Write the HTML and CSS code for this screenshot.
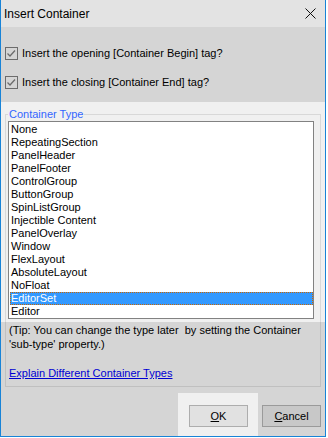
FILE: index.html
```html
<!DOCTYPE html>
<html lang="en">
<head>
<meta charset="UTF-8">
<meta name="viewport" content="width=device-width, initial-scale=1.0">
<title>Insert Container</title>
<link rel="stylesheet" href="styles.css">
</head>
<body>

<div class="window">
    <div class="titlebar">
        <span class="title">Insert Container</span>
        <svg class="close" width="11" height="11" viewBox="0 0 11 11">
            <path d="M0.5 0.5 L10.5 10.5 M10.5 0.5 L0.5 10.5" stroke="#111" stroke-width="1"/>
        </svg>
    </div>

    <div class="content">
        <div class="options">
            <label class="check-row">
                <svg class="check" width="13" height="13" viewBox="0 0 13 13">
                    <rect x="0.5" y="0.5" width="12" height="12" fill="none" stroke="#7a7a7a"/>
                    <path d="M2.5 6.5 L5 9 L10 3.5" fill="none" stroke="#7a7a7a" stroke-width="1.3"/>
                </svg>
                <span>Insert the opening [Container Begin] tag?</span>
            </label>
            <label class="check-row">
                <svg class="check" width="13" height="13" viewBox="0 0 13 13">
                    <rect x="0.5" y="0.5" width="12" height="12" fill="none" stroke="#7a7a7a"/>
                    <path d="M2.5 6.5 L5 9 L10 3.5" fill="none" stroke="#7a7a7a" stroke-width="1.3"/>
                </svg>
                <span>Insert the closing [Container End] tag?</span>
            </label>
        </div>

        <fieldset class="group">
            <legend>Container Type</legend>
            <ul class="listbox">
                <li>None</li>
                <li>RepeatingSection</li>
                <li>PanelHeader</li>
                <li>PanelFooter</li>
                <li>ControlGroup</li>
                <li>ButtonGroup</li>
                <li>SpinListGroup</li>
                <li>Injectible Content</li>
                <li>PanelOverlay</li>
                <li>Window</li>
                <li>FlexLayout</li>
                <li>AbsoluteLayout</li>
                <li>NoFloat</li>
                <li class="selected">EditorSet</li>
                <li>Editor</li>
            </ul>
            <p class="tip">(Tip: You can change the type later&nbsp; by setting the Container<br>'sub-type' property.)</p>
            <a class="link" href="#">Explain Different Container Types</a>
        </fieldset>

        <div class="buttons">
            <button class="btn"><u>O</u>K</button>
            <button class="btn"><u>C</u>ancel</button>
        </div>
    </div>

    <!-- dimmed areas around the highlighted parts -->
    <div class="dim dim-top"></div>
    <div class="dim dim-mid"></div>
    <div class="dim dim-left"></div>
    <div class="dim dim-right"></div>
</div>

</body>
</html>
```

FILE: styles.css
```css
body {
    margin: 0;
    background: #fff;
}

.window {
    position: relative;
    width: 326px;
    height: 437px;
    box-sizing: border-box;
    border: 1px solid #1883d7;
    border-top: none;
    background: #f0f0f0;
    font-family: "Liberation Sans", Arial, sans-serif;
    font-size: 11px;
    color: #000;
}

.titlebar {
    height: 27px;
    background: #fff;
    display: flex;
    align-items: center;
    justify-content: space-between;
    padding: 0 9px 0 3px;
    font-size: 12px;
}

.close {
    display: block;
}

.content {
    padding: 0 4px;
}

.options {
    padding-top: 17px;
}

.check-row {
    display: flex;
    align-items: center;
    gap: 4px;
    height: 18px;
}

.check-row + .check-row {
    margin-top: 11px;
}

.check {
    display: block;
    flex: none;
}

.group {
    width: 316px;
    box-sizing: border-box;
    margin: 17px 0 0 0;
    padding: 0 2px 6px 2px;
    border: 1px solid #d8d8d8;
    min-inline-size: 0;
}

.group legend {
    padding: 0 1px;
    line-height: 13px;
    color: #3366ff;
}

.listbox {
    list-style: none;
    margin: 0;
    padding: 1px 0 0 1px;
    width: 306px;
    height: 198px;
    box-sizing: border-box;
    border: 1px solid #828282;
    background: #fff;
    overflow: hidden;
}

.listbox li {
    height: 13px;
    line-height: 13px;
    padding-left: 1px;
    white-space: nowrap;
}

.listbox li.selected {
    background: #3399ff;
    color: #fff;
    outline: 1px dotted #cc6600;
    outline-offset: -1px;
}

.tip {
    margin: 4px 0 0 1px;
    line-height: 14px;
}

.link {
    display: block;
    margin: 15px 0 0 1px;
    line-height: 14px;
    color: #0000ee;
    text-decoration: underline;
}

.buttons {
    display: flex;
    justify-content: flex-end;
    gap: 14px;
    margin-top: 18px;
}

.btn {
    width: 59px;
    height: 22px;
    padding: 0;
    border: 1px solid #adadad;
    background: #e1e1e1;
    font-family: inherit;
    font-size: 11px;
    color: #000;
}

.dim {
    position: absolute;
    background: rgba(0, 0, 0, 0.11);
}

.dim-top {
    top: 0;
    left: 0;
    right: 0;
    height: 102px;
}

.dim-mid {
    top: 322px;
    left: 0;
    right: 0;
    height: 71px;
}

.dim-left {
    top: 393px;
    bottom: 0;
    left: 0;
    width: 177px;
}

.dim-right {
    top: 393px;
    bottom: 0;
    left: 257px;
    right: 0;
}
```
